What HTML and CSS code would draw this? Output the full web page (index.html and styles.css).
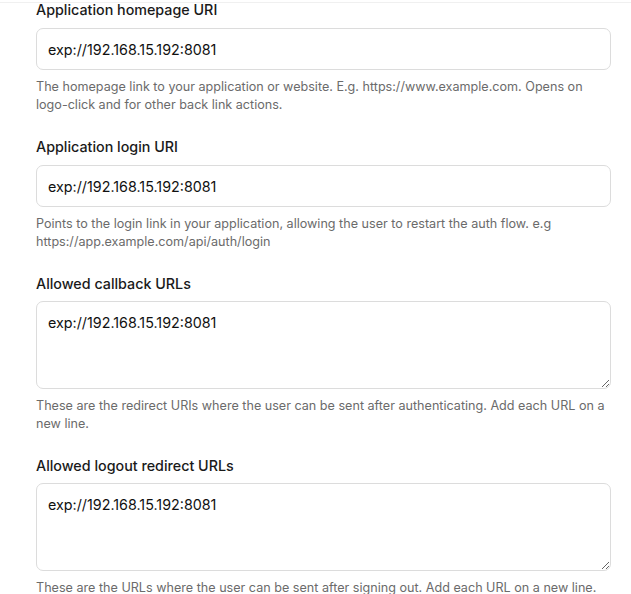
FILE: index.html
```html
<!DOCTYPE html>
<html>
<head>
<meta charset="utf-8">
<link rel="stylesheet" href="styles.css">
</head>
<body>
<div class="topline"></div>
<form class="form">
  <div class="field">
    <label class="label">Application homepage URI</label>
    <input class="input" type="text" value="exp://192.168.15.192:8081">
    <p class="help">The homepage link to your application or website. E.g. https://www.example.com. Opens on logo-click and for other back link actions.</p>
  </div>
  <div class="field">
    <label class="label">Application login URI</label>
    <input class="input" type="text" value="exp://192.168.15.192:8081">
    <p class="help">Points to the login link in your application, allowing the user to restart the auth flow. e.g https://app.example.com/api/auth/login</p>
  </div>
  <div class="field field-area">
    <label class="label">Allowed callback URLs</label>
    <textarea class="textarea">exp://192.168.15.192:8081</textarea>
    <p class="help">These are the redirect URIs where the user can be sent after authenticating. Add each URL on a new line.</p>
  </div>
  <div class="field field-area">
    <label class="label">Allowed logout redirect URLs</label>
    <textarea class="textarea">exp://192.168.15.192:8081</textarea>
    <p class="help">These are the URLs where the user can be sent after signing out. Add each URL on a new line.</p>
  </div>
</form>
</body>
</html>
```
FILE: styles.css
```css
html, body {
  margin: 0;
  padding: 0;
  background: #ffffff;
  overflow: hidden;
}
body {
  font-family: Inter, "Noto Sans", sans-serif;
  color: #1a1a1a;
}
.topline {
  height: 2px;
  border-bottom: 1px solid #f0f0f0;
}
.form {
  margin-top: -3px;
  padding-left: 36px;
  width: 575px;
  display: flex;
  flex-direction: column;
  gap: 23px;
}
.field {
  display: flex;
  flex-direction: column;
}
.label {
  font-size: 14.3px;
  line-height: 20px;
  font-weight: 500;
  color: #1a1a1a;
  margin-bottom: 8px;
}
.field-area .label {
  margin-bottom: 7px;
}
.input, .textarea {
  box-sizing: border-box;
  width: 575px;
  border: 1px solid #dcdcdc;
  border-radius: 7px;
  font-family: Inter, "Noto Sans", sans-serif;
  font-size: 14.3px;
  color: #111111;
  background: #ffffff;
  padding: 0 11px;
  margin: 0;
  outline: none;
}
.input {
  height: 42px;
  line-height: 20px;
}
.textarea {
  height: 88px;
  padding-top: 11px;
  line-height: 20px;
  resize: vertical;
  display: block;
}
.help {
  margin: 8px 0 0 0;
  font-size: 12.6px;
  line-height: 18px;
  color: #6b6b6b;
}
```
